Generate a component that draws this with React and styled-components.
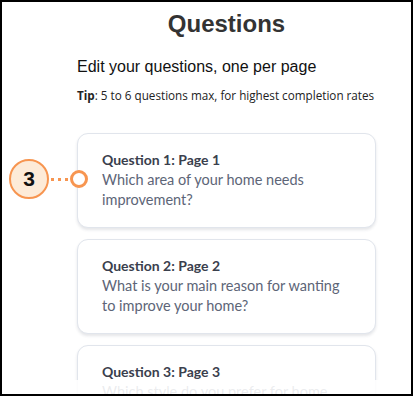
import React from "react";
import styled, { createGlobalStyle } from "styled-components";

const GlobalStyle = createGlobalStyle`
  html, body {
    margin: 0;
    padding: 0;
    background: #ffffff;
  }
`;

const questions = [
  { title: "Question 1: Page 1", text: "Which area of your home needs improvement?" },
  { title: "Question 2: Page 2", text: "What is your main reason for wanting to improve your home?" },
  { title: "Question 3: Page 3", text: "Which style do you prefer for home improvements?" },
];

function App() {
  return (
    <>
      <GlobalStyle />
      <Frame>
        <Column>
          <Title>Questions</Title>
          <Subtitle>Edit your questions, one per page</Subtitle>
          <Tip>
            <b>Tip</b>: 5 to 6 questions max, for highest completion rates
          </Tip>
          <List>
            {questions.map((q) => (
              <Card key={q.title}>
                <CardTitle>{q.title}</CardTitle>
                <CardText>{q.text}</CardText>
              </Card>
            ))}
          </List>
        </Column>

        <Callout>
          <Badge>3</Badge>
          <Dots>
            <Dot />
            <Dot />
            <Dot />
          </Dots>
          <Ring />
        </Callout>

        <Fade />
      </Frame>
    </>
  );
}

export default App;

const Frame = styled.div`
  position: relative;
  width: 413px;
  height: 396px;
  box-sizing: border-box;
  border: 2px solid #000;
  overflow: hidden;
  background: #fff;
  padding: 8px 0 0 75px;
`;

const Column = styled.div`
  width: 299px;
  display: flex;
  flex-direction: column;
`;

const Title = styled.h1`
  margin: 0;
  font-family: "Liberation Sans", Arial, sans-serif;
  font-weight: bold;
  font-size: 24px;
  line-height: 28px;
  color: #333333;
  text-align: center;
`;

const Subtitle = styled.p`
  margin: 19px 0 0 0;
  font-family: "Liberation Sans", Arial, sans-serif;
  font-size: 16px;
  line-height: 20px;
  color: #111111;
`;

const Tip = styled.p`
  margin: 10px 0 0 0;
  font-family: "Open Sans", Lato, sans-serif;
  font-size: 11.7px;
  line-height: 16px;
  color: #222;
  white-space: nowrap;

  b {
    font-weight: 700;
  }
`;

const List = styled.div`
  margin-top: 30px;
  display: flex;
  flex-direction: column;
  gap: 11px;
`;

const Card = styled.div`
  box-sizing: border-box;
  min-height: 95px;
  padding: 16px 24px 16px 24px;
  border: 1px solid #e1e5ec;
  border-radius: 11px;
  background: #fff;
  box-shadow: 0 2px 3px rgba(40, 50, 70, 0.12);
  font-family: Lato, "Noto Sans", sans-serif;
`;

const CardTitle = styled.div`
  font-size: 14px;
  font-weight: 700;
  line-height: 20px;
  color: #3a404d;
`;

const CardText = styled.div`
  font-size: 14.5px;
  line-height: 20px;
  color: #5d6577;
`;

const Callout = styled.div`
  position: absolute;
  left: 7px;
  top: 157px;
  display: flex;
  align-items: center;
`;

const Badge = styled.div`
  width: 40px;
  height: 40px;
  box-sizing: border-box;
  border-radius: 50%;
  border: 2.5px solid #f79550;
  background: #fdebd8;
  display: flex;
  align-items: center;
  justify-content: center;
  font-family: "Liberation Sans", Arial, sans-serif;
  font-weight: bold;
  font-size: 21px;
  color: #111;
`;

const Dots = styled.div`
  display: flex;
  gap: 4px;
  margin: 0 2px 0 2px;
`;

const Dot = styled.span`
  width: 3px;
  height: 3px;
  background: #f79550;
`;

const Ring = styled.div`
  width: 18px;
  height: 18px;
  box-sizing: border-box;
  border-radius: 50%;
  border: 3px solid #f79550;
  background: #fff;
`;

const Fade = styled.div`
  position: absolute;
  left: 0;
  right: 0;
  bottom: 0;
  height: 14px;
  background: rgba(255, 255, 255, 0.88);
`;
